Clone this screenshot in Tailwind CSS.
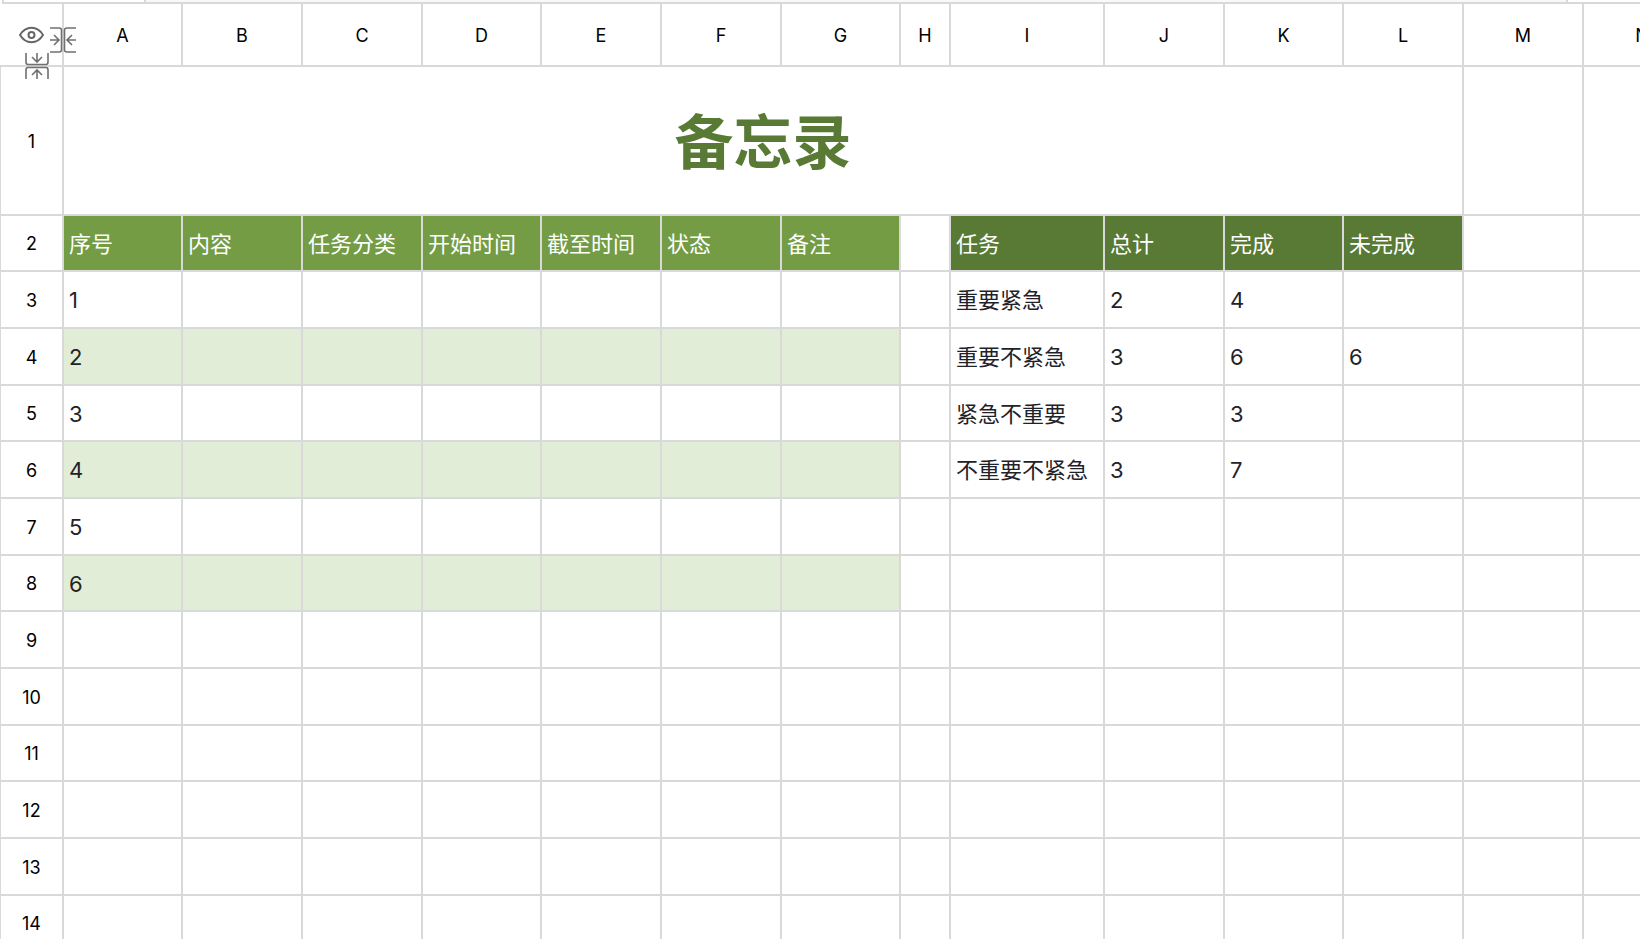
<!DOCTYPE html>
<html lang="zh-CN">
<head>
<meta charset="utf-8">
<title>备忘录</title>
<script src="https://cdn.jsdelivr.net/npm/@tailwindcss/browser@4"></script>
</head>
<body class="h-screen overflow-hidden bg-white text-[#1f2329] font-['Inter','Noto_Sans_CJK_SC',sans-serif]">
<div class="relative">
  <div class="ml-[2px] flex h-[4px] border-b-2 border-l-2 border-[#d9d9d9]">
    <div class="w-[142px] border-r-2 border-[#d9d9d9]"></div>
    <div class="flex-1 bg-[#f7f8f8]"></div>
    <div class="w-[74px] border-l-2 border-[#d9d9d9]"></div>
  </div>
  <table id="sheet" class="w-[1702px] table-fixed border-separate border-spacing-0"></table>
  <button type="button" aria-label="显示" class="absolute left-[19px] top-[26px]">
    <svg class="block h-[18px] w-[25px]" viewBox="0 0 25 18" fill="none" stroke="#666" stroke-width="2"><path d="M1 9C4 4 8 1.8 12.5 1.8S21 4 24 9c-3 5-7 7.200-11.500 7.200S4 14 1 9Z" stroke-linejoin="round"/><circle cx="12.500" cy="9" r="3"/></svg>
  </button>
  <button type="button" aria-label="收起列" class="absolute left-[50px] top-[27px]">
    <svg class="block h-[26px] w-[26px]" viewBox="0 0 26 26" fill="none" stroke="#707070" stroke-width="1.600"><path d="M0 1h9q2.500 0 2.500 2v20q0 2-2.500 2H0M26 1h-9q-2.500 0-2.500 2v20q0 2 2.500 2h9M0 13h9M4 8l5 5-5 5M26 13h-9M22 8l-5 5 5 5"/></svg>
  </button>
  <button type="button" aria-label="收起行" class="absolute left-[25px] top-[53px]">
    <svg class="block h-[26px] w-[24px]" viewBox="0 0 24 26" fill="none" stroke="#707070" stroke-width="1.600"><path d="M1 0v9q0 2.500 2 2.500h18q2 0 2-2.500V0M1 26v-9q0-2.500 2-2.500h18q2 0 2 2.500v9M12 0v9M7 4l5 5 5-5M12 26v-9M7 22l5-5 5 5"/></svg>
  </button>
</div>
<script>
const cols = 'ABCDEFGHIJKLMN'.split('');
const widths = [64,119,120,120,119,120,120,119,50,154,120,119,120,120,118];
const heights = [149,56,57,57,56,57,57,56,57,57,56,57,57,56];
const line = 'border-r-2 border-b-2 border-[#d9d9d9] ';
const data = {
  2: ['序号','内容','任务分类','开始时间','截至时间','状态','备注','','任务','总计','完成','未完成'],
  3: ['1','','','','','','','','重要紧急','2','4',''],
  4: ['2','','','','','','','','重要不紧急','3','6','6'],
  5: ['3','','','','','','','','紧急不重要','3','3',''],
  6: ['4','','','','','','','','不重要不紧急','3','7',''],
  7: ['5'], 8: ['6']
};
let h = '<colgroup>' + widths.map(w => `<col style="width:${w}px">`).join('') + '</colgroup>';
h += '<thead><tr style="height:63px"><td class="' + line + '"></td>' + cols.map(c =>
  `<th scope="col" class="${line} px-0 pt-[2px] pb-0 text-center text-[18px] leading-6 font-normal text-black">${c}</th>`).join('') + '</tr></thead><tbody>';
heights.forEach((ht, i) => {
  const r = i + 1;
  h += `<tr style="height:${ht}px"><th scope="row" class="${line} border-l-1 px-0 pt-[2px] pb-0 text-center text-[18px] leading-6 font-normal text-black">${r}</th>`;
  if (r === 1) {
    h += `<td colspan="12" class="${line} px-0 pt-[4px] pb-0 text-center text-[59px] leading-[80px] font-bold text-[#587a34]">备忘录</td><td class="${line}"></td><td class="${line}"></td>`;
  } else {
    cols.forEach((_, c) => {
      let bg = '';
      if (r === 2 && c < 7) bg = 'bg-[#739c44] text-white';
      else if (r === 2 && c > 7 && c < 12) bg = 'bg-[#587a34] text-white';
      else if (c < 7 && (r === 4 || r === 6 || r === 8)) bg = 'bg-[#e1edd6]';
      h += `<td class="${line} ${bg} whitespace-nowrap pt-[1px] pb-0 pr-0 pl-[5px] text-[22px] leading-8">${(data[r] || [])[c] || ''}</td>`;
    });
  }
  h += '</tr>';
});
document.getElementById('sheet').innerHTML = h + '</tbody>';
</script>
</body>
</html>
